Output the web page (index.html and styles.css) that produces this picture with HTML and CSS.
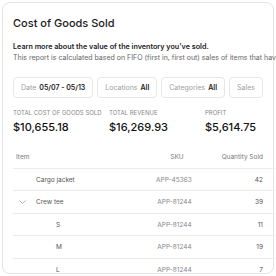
FILE: index.html
```html
<!DOCTYPE html>
<html>
  <head>
    <meta charset="UTF-8" />
    <title>Cost of Goods Sold</title>
    <link rel="stylesheet" href="styles.css">
  </head>
  <body>
    <div class="card">
      <h1>Cost of Goods Sold</h1>
      <p class="lead">Learn more about the value of the inventory you've sold.</p>
      <p class="note">This report is calculated based on FIFO (first in, first out) sales of items that have been sold.</p>
      <div class="filters">
        <button class="filter"><span class="filter-label">Date</span> <span class="filter-value">05/07 - 05/13</span></button>
        <button class="filter"><span class="filter-label">Locations</span> <span class="filter-value">All</span></button>
        <button class="filter"><span class="filter-label">Categories</span> <span class="filter-value">All</span></button>
        <button class="filter"><span class="filter-label">Sales</span></button>
      </div>
      <div class="stats">
        <div class="stat">
          <div class="stat-label">Total cost of goods sold</div>
          <div class="stat-value">$10,655.18</div>
        </div>
        <div class="stat">
          <div class="stat-label">Total revenue</div>
          <div class="stat-value">$16,269.93</div>
        </div>
        <div class="stat">
          <div class="stat-label">Profit</div>
          <div class="stat-value">$5,614.75</div>
        </div>
      </div>
      <table>
        <thead>
          <tr>
            <th class="col-item">Item</th>
            <th class="col-sku">SKU</th>
            <th class="col-qty">Quantity Sold</th>
          </tr>
        </thead>
        <tbody>
          <tr>
            <td class="col-item"><span class="name">Cargo jacket</span></td>
            <td class="col-sku">APP-45363</td>
            <td class="col-qty">42</td>
          </tr>
          <tr>
            <td class="col-item">
              <svg class="chevron" width="7" height="4" viewBox="0 0 7 4"><polyline points="0.5,0.5 3.5,3.5 6.5,0.5" fill="none" stroke="#a0a0a0" stroke-width="0.8"/></svg><span class="name">Crew tee</span>
            </td>
            <td class="col-sku">APP-81244</td>
            <td class="col-qty">39</td>
          </tr>
          <tr class="child">
            <td class="col-item"><span class="name">S</span></td>
            <td class="col-sku">APP-81244</td>
            <td class="col-qty">11</td>
          </tr>
          <tr class="child">
            <td class="col-item"><span class="name">M</span></td>
            <td class="col-sku">APP-81244</td>
            <td class="col-qty">19</td>
          </tr>
          <tr class="child">
            <td class="col-item"><span class="name">L</span></td>
            <td class="col-sku">APP-81244</td>
            <td class="col-qty">7</td>
          </tr>
        </tbody>
      </table>
    </div>
  </body>
</html>
```

FILE: styles.css
```css
body {
  font-family: Inter, "Noto Sans", Arial, sans-serif;
  margin: 0;
  padding: 0;
  background-color: #fff;
  color: #222;
}
.card {
  box-sizing: border-box;
  width: 272px;
  height: 272px;
  margin: 2px;
  padding: 13px 0 0 10px;
  border: 1px solid #e4e4e4;
  border-radius: 8px;
  overflow-x: visible;
  overflow-y: clip;
}
h1 {
  font-size: 11px;
  line-height: 14px;
  font-weight: 500;
  color: #1a1a1a;
  margin: 0;
}
.lead {
  font-size: 7.2px;
  line-height: 11px;
  font-weight: 600;
  margin: 10.5px 0 0;
  white-space: nowrap;
}
.note {
  font-size: 7px;
  line-height: 11px;
  color: #666;
  margin: 0;
  white-space: nowrap;
}
.filters {
  display: flex;
  gap: 4px;
  margin-top: 14.5px;
}
.filter {
  height: 21px;
  padding: 0 7px;
  background-color: #fff;
  border: 1px solid #e6e6e6;
  border-radius: 4px;
  font-family: inherit;
  font-size: 7px;
  white-space: nowrap;
}
.filter-label {
  color: #a0a0a0;
}
.filter-value {
  color: #222;
  font-weight: 600;
  margin-left: 1px;
}
.stats {
  display: grid;
  grid-template-columns: 96px 96px 1fr;
  margin-top: 11px;
}
.stat-label {
  font-size: 6px;
  line-height: 8px;
  color: #888;
  text-transform: uppercase;
  white-space: nowrap;
}
.stat-value {
  font-size: 11px;
  line-height: 14px;
  font-weight: 500;
  color: #111;
  margin-top: 3px;
}
table {
  width: 262px;
  border-collapse: collapse;
  margin-top: 12px;
  font-size: 6.5px;
}
th,
td {
  padding: 5.75px 0;
  line-height: 10px;
  border-bottom: 1px solid #ebebeb;
  font-weight: 400;
  white-space: nowrap;
}
th {
  color: #777;
  padding-bottom: 6px;
}
td {
  color: #555;
}
.col-item {
  text-align: left;
  width: 120px;
}
th.col-item {
  padding-left: 3px;
}
.col-sku {
  text-align: right;
  color: #888;
}
th.col-sku {
  padding-right: 8px;
  color: #777;
}
.col-qty {
  text-align: right;
  padding-right: 12px;
}
.chevron {
  display: inline-block;
  margin: 0 0 1px 6px;
  vertical-align: middle;
}
.name {
  display: inline-block;
  margin-left: 23px;
}
.chevron + .name {
  margin-left: 10px;
}
.child .name {
  margin-left: 43px;
}
```
